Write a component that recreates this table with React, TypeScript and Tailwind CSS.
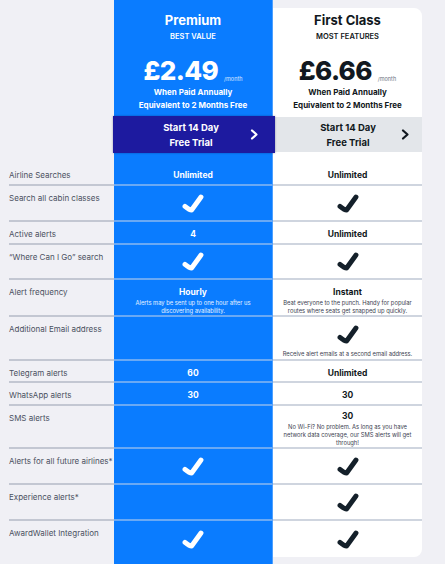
import React from 'react';

type Cell =
  | { kind: 'text'; value: string; sub?: string[] }
  | { kind: 'check'; sub?: string[] }
  | { kind: 'empty' };

interface Row {
  label: string;
  height: string;
  premium: Cell;
  first: Cell;
}

const rows: Row[] = [
  { label: 'Airline Searches', height: 'h-[23px]', premium: { kind: 'text', value: 'Unlimited' }, first: { kind: 'text', value: 'Unlimited' } },
  { label: 'Search all cabin classes', height: 'h-[36px]', premium: { kind: 'check' }, first: { kind: 'check' } },
  { label: 'Active alerts', height: 'h-[23px]', premium: { kind: 'text', value: '4' }, first: { kind: 'text', value: 'Unlimited' } },
  { label: '\u201CWhere Can I Go\u201D search', height: 'h-[35px]', premium: { kind: 'check' }, first: { kind: 'check' } },
  {
    label: 'Alert frequency',
    height: 'h-[37px]',
    premium: { kind: 'text', value: 'Hourly', sub: ['Alerts may be sent up to one hour after us', 'discovering availability.'] },
    first: { kind: 'text', value: 'Instant', sub: ['Beat everyone to the punch. Handy for popular', 'routes where seats get snapped up quickly.'] },
  },
  {
    label: 'Additional Email address',
    height: 'h-[44px]',
    premium: { kind: 'empty' },
    first: { kind: 'check', sub: ['Receive alert emails at a second email address.'] },
  },
  { label: 'Telegram alerts', height: 'h-[22px]', premium: { kind: 'text', value: '60' }, first: { kind: 'text', value: 'Unlimited' } },
  { label: 'WhatsApp alerts', height: 'h-[23px]', premium: { kind: 'text', value: '30' }, first: { kind: 'text', value: '30' } },
  {
    label: 'SMS alerts',
    height: 'h-[43px]',
    premium: { kind: 'empty' },
    first: {
      kind: 'text',
      value: '30',
      sub: ['No Wi-Fi? No problem. As long as you have', 'network data coverage, our SMS alerts will get', 'through!'],
    },
  },
  { label: 'Alerts for all future airlines*', height: 'h-[36px]', premium: { kind: 'check' }, first: { kind: 'check' } },
  { label: 'Experience alerts*', height: 'h-[36px]', premium: { kind: 'empty' }, first: { kind: 'check' } },
  { label: 'AwardWallet Integration', height: 'h-[36px]', premium: { kind: 'check' }, first: { kind: 'check' } },
];

function Check({ dark }: { dark?: boolean }) {
  return (
    <svg width="22" height="19" viewBox="0 0 22 19" fill="none" className="shrink-0">
      <path
        d="M3 12.4 C5.6 14.6 7.8 16 9.6 16 L19 3"
        stroke={dark ? '#14202a' : '#ffffff'}
        strokeWidth="4.9"
        strokeLinecap="round"
        strokeLinejoin="round"
      />
    </svg>
  );
}

function Chevron({ dark }: { dark?: boolean }) {
  return (
    <svg width="9" height="11" viewBox="0 0 9 11" fill="none">
      <path d="M2 1.5 L6.5 5.5 L2 9.5" stroke={dark ? '#111820' : '#ffffff'} strokeWidth="2.2" strokeLinecap="round" strokeLinejoin="round" />
    </svg>
  );
}

function CellContent({ cell, dark }: { cell: Cell; dark?: boolean }) {
  const strong = dark ? 'text-[#111820]' : 'text-white';
  const soft = dark ? 'text-[#3b4250]' : 'text-white/90';

  if (cell.kind === 'empty') return null;

  if (cell.kind === 'check') {
    if (cell.sub) {
      return (
        <div className="flex flex-col items-center pt-[8px]">
          <Check dark={dark} />
          <div className={`mt-[6px] text-[5.8px] leading-[7px] text-center ${soft}`}>
            {cell.sub.map((s) => (
              <div key={s}>{s}</div>
            ))}
          </div>
        </div>
      );
    }
    return (
      <div className="flex h-full items-center justify-center">
        <Check dark={dark} />
      </div>
    );
  }

  return (
    <div className={`flex flex-col items-center ${cell.sub && cell.sub.length > 2 ? 'pt-[5px]' : 'pt-[7px]'}`}>
      <div className={`text-[8.5px] leading-[11px] font-bold ${strong}`}>{cell.value}</div>
      {cell.sub && (
        <div className={`mt-[1px] text-[5.8px] leading-[8px] text-center ${soft}`}>
          {cell.sub.map((s) => (
            <div key={s}>{s}</div>
          ))}
        </div>
      )}
    </div>
  );
}

export default function App() {
  return (
    <div className="min-h-[564px] w-[445px] bg-[#f0f0f5] font-['Inter',sans-serif] overflow-hidden">
      <div className="grid w-[422px] grid-cols-[114px_159px_149px]">
        {/* Header */}
        <div className="h-[163px]" />
        <div className="flex h-[163px] flex-col items-center border-r border-[#4da0ff] bg-[#0a7cff] pt-[11px] text-white">
          <div className="text-[13px] leading-[18px] font-bold">Premium</div>
          <div className="mt-[3px] text-[7.5px] leading-[10px] font-semibold uppercase">Best Value</div>
          <div className="mt-[14px] flex h-[30px] items-end">
            <span className="text-[26px] leading-[30px] font-extrabold tracking-tight">£2.49</span>
            <span className="mb-[4px] ml-[6px] text-[5.5px] leading-[6px] text-white/80">/month</span>
          </div>
          <div className="text-[8px] leading-[13px] font-bold">When Paid Annually</div>
          <div className="text-[8px] leading-[13px] font-bold">Equivalent to 2 Months Free</div>
          <div className="relative z-10 mt-[4px] -mr-[3px] -ml-[2px] flex h-[37px] w-[162px] items-center bg-[#1d1a9f] shadow-[0_0_2px_rgba(0,0,40,0.35)]">
            <div className="flex-1 pl-[20px] text-center text-[9.5px] leading-[15px] font-bold text-white">
              <div>Start 14 Day</div>
              <div>Free Trial</div>
            </div>
            <div className="pr-[16px]">
              <Chevron />
            </div>
          </div>
        </div>
        <div className="h-[163px] pt-[8px]">
          <div className="flex h-full flex-col items-center rounded-tr-[8px] bg-white pt-[3px] text-[#111820]">
            <div className="text-[13px] leading-[18px] font-bold">First Class</div>
            <div className="mt-[3px] text-[7.5px] leading-[10px] font-semibold uppercase">Most Features</div>
            <div className="mt-[14px] flex h-[30px] items-end">
              <span className="text-[26px] leading-[30px] font-extrabold tracking-tight">£6.66</span>
              <span className="mb-[4px] ml-[6px] text-[5.5px] leading-[6px] text-[#6b7280]">/month</span>
            </div>
            <div className="text-[8px] leading-[13px] font-bold">When Paid Annually</div>
            <div className="text-[8px] leading-[13px] font-bold">Equivalent to 2 Months Free</div>
            <div className="mt-[5px] ml-[2px] flex h-[35px] w-[147px] items-center bg-[#e3e6ea]">
              <div className="flex-1 pl-[20px] text-center text-[9.5px] leading-[15px] font-bold text-[#111820]">
                <div>Start 14 Day</div>
                <div>Free Trial</div>
              </div>
              <div className="pr-[12px]">
                <Chevron dark />
              </div>
            </div>
          </div>
        </div>

        {/* Feature rows */}
        {rows.map((row, i) => {
          const last = i === rows.length - 1;
          return (
            <React.Fragment key={row.label}>
              <div className={`${row.height} pl-[9px]`}>
                <div
                  className={`h-full pt-[7px] text-[8px] leading-[11px] text-[#4b5161] ${last ? '' : 'border-b-2 border-[#c3c7d2]'}`}
                >
                  {row.label}
                </div>
              </div>
              <div
                className={`${row.height} border-r border-[#4da0ff] bg-[#0a7cff] ${last ? '' : 'border-b-2 border-b-[#6aa9f4]'}`}
              >
                <CellContent cell={row.premium} />
              </div>
              <div
                className={`${row.height} bg-white ${last ? 'rounded-br-[8px]' : 'border-b-2 border-[#cfd5df]'}`}
              >
                <CellContent cell={row.first} dark />
              </div>
            </React.Fragment>
          );
        })}

        {/* Blue column runs past the card */}
        <div className="h-[12px]" />
        <div className="h-[12px] border-r border-[#4da0ff] bg-[#0a7cff]" />
        <div className="h-[12px]" />
      </div>
    </div>
  );
}
